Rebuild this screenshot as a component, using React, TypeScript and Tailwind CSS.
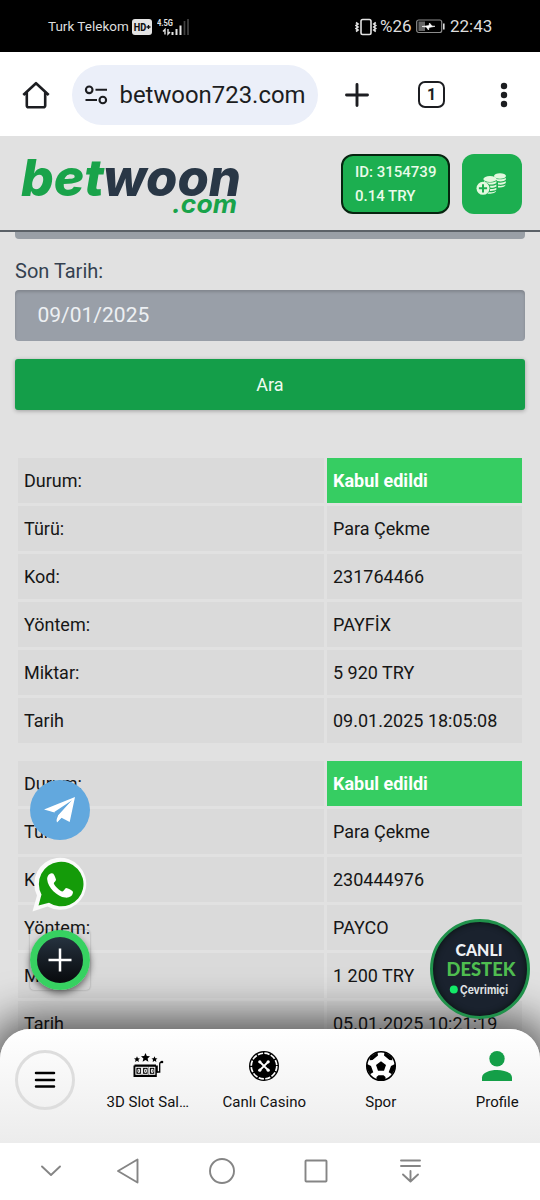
import React from "react";

const rowsA: [string, string][] = [
  ["Durum:", "Kabul edildi"],
  ["Türü:", "Para Çekme"],
  ["Kod:", "231764466"],
  ["Yöntem:", "PAYFİX"],
  ["Miktar:", "5 920 TRY"],
  ["Tarih", "09.01.2025 18:05:08"],
];
const rowsB: [string, string][] = [
  ["Durum:", "Kabul edildi"],
  ["Türü:", "Para Çekme"],
  ["Kod:", "230444976"],
  ["Yöntem:", "PAYCO"],
  ["Miktar:", "1 200 TRY"],
  ["Tarih", "05.01.2025 10:21:19"],
];

function StatusBar() {
  return (
    <div className="flex h-[52px] shrink-0 items-center bg-black pl-12 pr-12 pt-px text-[#dedede]">
      <span className="w-[84px] whitespace-nowrap text-[13.5px] leading-none">Turk Telekom</span>
      <svg width="20" height="16" viewBox="0 0 20 16">
        <rect width="20" height="16" rx="3" fill="#e4e4e4" />
        <text x="1.8" y="12" fontSize="10.5" fontWeight="800" fill="#111" textLength="12.5" lengthAdjust="spacingAndGlyphs">HD</text>
        <path d="M14.5 8h4M16.5 6v4" stroke="#111" strokeWidth="1.3" />
      </svg>
      <svg className="ml-[5px]" width="33" height="18" viewBox="0 0 33 18">
        <text x="0" y="7.8" fontSize="9" fontWeight="700" fill="#e4e4e4" textLength="16" lengthAdjust="spacingAndGlyphs">4.5G</text>
        <path d="M8 16.5v-5l-2 2M11 11v5l2-2" stroke="#e4e4e4" strokeWidth="1.4" fill="none" />
        <path d="M15.5 17v-3M19.5 17v-6M23.5 17V7.500" stroke="#e4e4e4" strokeWidth="2" />
        <path d="M27.500 17V3M31 17V1" stroke="#414141" strokeWidth="1.7" />
      </svg>
      <div className="ml-auto flex items-center">
        <svg width="22" height="18" viewBox="0 0 22 18" fill="none" stroke="#e2e2e2" strokeWidth="1.6">
          <rect x="6" y="1.500" width="10" height="15" rx="1.700" />
          <path d="M1 4.500l2 1.500-2 1.500 2 1.500-2 1.500 2 1.500-2 1.500M20.800 4.500l-2 1.500 2 1.500-2 1.500 2 1.500-2 1.500 2 1.500" />
        </svg>
        <span className="ml-[3px] w-[32px] whitespace-nowrap text-[17px] leading-none">%26</span>
        <svg className="ml-[4px]" width="29" height="15" viewBox="0 0 29 15">
          <rect x=".7" y="1" width="25" height="12.500" rx="2" fill="none" stroke="#8c8c8c" strokeWidth="1.2" />
          <rect x="2.500" y="2.500" width="6.500" height="9.500" fill="#666" />
          <path d="M6 7.500l7-1 .5-2.500 2.500 3 3 .3-6 1.200-.5 2.500-2.200-3z" fill="#fff" stroke="#fff" strokeWidth=".6" />
          <path d="M27.800 4.500v6" stroke="#ddd" strokeWidth="1.600" />
        </svg>
        <span className="ml-[5px] w-[42px] whitespace-nowrap text-[17px] leading-none">22:43</span>
      </div>
    </div>
  );
}

function BrowserBar() {
  return (
    <div className="flex h-[84px] shrink-0 items-center bg-white pl-[22px] pt-px text-[#1c1d21]">
      <svg width="28" height="30" viewBox="0 0 28 30" fill="none" stroke="currentColor" strokeWidth="2.600" strokeLinejoin="round">
        <path d="M1.300 15L14 3.200 26.700 15M4.800 12.500v13a1.800 1.800 0 0 0 1.800 1.800h14.800a1.800 1.800 0 0 0 1.800-1.800v-13" />
      </svg>
      <div className="ml-[22px] flex h-[60px] w-[246px] items-center rounded-full bg-[#ebeff9] pl-3">
        <svg width="24" height="20" viewBox="0 0 24 20" fill="none" stroke="currentColor" strokeWidth="2.100">
          <circle cx="5.200" cy="4.800" r="3.300" />
          <circle cx="18.800" cy="15" r="3.300" />
          <path d="M11.500 4.800H23M1.500 15H13" />
        </svg>
        <span className="ml-[11.500px] whitespace-nowrap pt-[2px] text-[23.900px]">betwoon723.com</span>
      </div>
      <svg className="ml-[27px]" width="24" height="24" viewBox="0 0 24 24" stroke="currentColor" strokeWidth="2.900" strokeLinecap="round">
        <path d="M12 1.500v21M1.500 12h21" />
      </svg>
      <div className="ml-[49px] flex h-[27px] w-[27px] items-center justify-center rounded-[7px] border-[2.500px] border-[#1c1d21] pt-px text-[16px] font-bold leading-none">1</div>
      <svg className="ml-[52px]" width="14" height="26" viewBox="0 0 14 26" fill="currentColor">
        <circle cx="7" cy="4" r="3.200" />
        <circle cx="7" cy="13" r="3.200" />
        <circle cx="7" cy="22" r="3.200" />
      </svg>
    </div>
  );
}

function Logo() {
  return (
    <svg width="224" height="84" viewBox="0 -9 224 84" aria-label="betwoon.com" fontFamily="Inter, sans-serif" fontWeight="800" fontStyle="italic">
      <text x="0" y="44.500" fontSize="51" fill="#19a34a" textLength="83" lengthAdjust="spacingAndGlyphs">bet</text>
      <text x="82" y="44.500" fontSize="51" fill="#293746" textLength="138" lengthAdjust="spacingAndGlyphs">woon</text>
      <text x="151" y="62" fontSize="25.500" fontWeight="700" fill="#19a34a" textLength="65" lengthAdjust="spacingAndGlyphs">.com</text>
    </svg>
  );
}

function Coins() {
  return (
    <svg width="32" height="24" viewBox="0 0 32 24" fill="#e4f8df">
      <ellipse cx="24" cy="4" rx="6" ry="2.800" />
      <path d="M18.200 5.800c2.200 2 9 2 11.600 0v2c-2 1.800-5 2-8.500 1.300zM22 10.500c3 .5 6 0 7.800-1.200v1.800c-2 1.500-4.500 1.800-7.800 1.400zM22 13.800c3 .4 6 0 7.600-1.300-.2 2.200-3 3.200-7.600 2.900z" />
      <ellipse cx="14" cy="7" rx="6.600" ry="3" />
      <path d="M8 8.900c3 2.300 9 2.200 12.400 0v2c-2 1.500-5 1.700-7.200 1.500-.8-1-2.700-2.200-5.200-2.200zM14 13.800c2.500.2 5-.2 6.400-1.300v2c-1.600 1-3.800 1.300-6 1.200zM14.200 17.100c2.500.1 5-.2 6.200-1.300v1.800c-1.700 1.200-4.200 1.500-6.500 1.400zM12.600 20.200c3 .2 6-.3 7.500-1.500-.2 2-3.800 3.300-8.600 3z" />
      <circle cx="7" cy="16.300" r="6.500" />
      <path d="M7 12.200v8.200M2.900 16.300h8.200" stroke="#1caf50" strokeWidth="2" />
    </svg>
  );
}

function SiteHeader() {
  return (
    <header className="flex h-24 shrink-0 items-center border-b-2 border-[#5b6167] bg-[#e1e1e1] pl-[21px] pr-[18px] pt-px">
      <Logo />
      <div className="ml-auto flex h-[60px] w-[109px] flex-col justify-center rounded-[12px] border-2 border-[#06240f] bg-[#1caf50] pl-3 text-[15px] font-medium leading-6 text-[#e9fbe8]">
        <span className="whitespace-nowrap">ID: 3154739</span>
        <span>0.14 TRY</span>
      </div>
      <div className="ml-3 flex h-[60px] w-[60px] items-center justify-center rounded-[12px] bg-[#1caf50]">
        <Coins />
      </div>
    </header>
  );
}

function Table({ rows }: { rows: [string, string][] }) {
  return (
    <div className="mx-[18px] flex flex-col gap-[3px] text-[18px] leading-[45px] text-[#161616]">
      {rows.map(([k, v], i) => (
        <div key={k} className="grid h-[45px] grid-cols-[306px_195px] gap-[3px]">
          <div className="bg-[#dadada] pl-[6px]">{k}</div>
          <div className={i === 0 ? "bg-[#36cd62] pl-[6px] font-bold text-white" : "bg-[#dadada] pl-[6px]"}>{v}</div>
        </div>
      ))}
    </div>
  );
}

function FloatingButtons() {
  return (
    <>
      <svg className="absolute left-[30px] top-[548px]" width="60" height="60" viewBox="0 0 60 60">
        <circle cx="30" cy="30" r="30" fill="#62a8de" />
        <path d="M14 29.500L45 17l-5.300 25-8.200-4.200-4.500 4.700-2.300-10z" fill="#fff" />
        <path d="M17.500 29.600L41.500 20.500 24.800 32.500z" fill="#fff" />
        <path d="M24.300 32L42 20.200 28.200 35.300 26 41z" fill="#62a8de" />
        <path d="M28.500 35.500L42.500 20 38.800 40.300 31.500 37.200 27 42z" fill="#fff" />
      </svg>
      <svg className="absolute left-[31px] top-[624px]" width="58" height="58" viewBox="0 0 58 58">
        <path d="M1.500 55.500L6 39.500A26 26 0 1 1 16.500 50.500z" fill="#fafafa" />
        <path d="M7.500 49.500l3-11A22.300 22.300 0 1 1 18 46.700z" fill="#149b09" />
        <path d="M20.500 17.200c-2.500.3-4.500 3-4.300 6.200.5 8 10 17 18 18.200 4 .4 7.600-1.600 7.800-5.600 0-1-5.200-3.900-6.700-3.900-1.500.2-2.200 3.200-3.800 3.300-2.500-.2-8-5.500-8.700-8 0-1.400 2.200-2 2.200-3.600-.2-1.600-2-5.800-3.100-6.300z" fill="#fff" />
      </svg>
      <div className="absolute left-[30px] top-[698px] flex h-[60px] w-[60px] items-center justify-center rounded-[4px] shadow-[0_0_2px_rgba(0,0,0,0.3)]">
        <div className="flex h-[60px] w-[60px] items-center justify-center rounded-full border-[7px] border-[#37d161] bg-linear-to-b from-[#263340] to-[#080a0d] shadow-[0_3px_7px_rgba(0,0,0,0.55)]">
          <svg width="24" height="24" viewBox="0 0 24 24" stroke="#fff" strokeWidth="2.500">
            <path d="M12 .5v23M.5 12h23" />
          </svg>
        </div>
      </div>
      <div className="absolute left-[430px] top-[687px] flex h-[100px] w-[100px] flex-col items-center rounded-full border-[3.500px] border-[#20924b] bg-[#1a222e] pt-[17px] shadow-[inset_0_0_6px_#08110d]">
        <svg width="80" height="64" viewBox="0 0 80 64" fontFamily="Lato, sans-serif">
          <text x="15.500" y="17" fontSize="16.500" fontWeight="900" fill="#eff1f5" textLength="47" lengthAdjust="spacingAndGlyphs">CANLI</text>
          <text x="6.500" y="36.500" fontSize="18.500" fontWeight="900" fill="#4fbd50" textLength="69" lengthAdjust="spacingAndGlyphs">DESTEK</text>
          <circle cx="13.800" cy="50.500" r="4" fill="#13e968" />
          <text x="20" y="54.500" fontSize="12" fontWeight="700" fontFamily="Inter, sans-serif" fill="#e0e2e5" textLength="48" lengthAdjust="spacingAndGlyphs">Çevrimiçi</text>
        </svg>
      </div>
    </>
  );
}

function SlotIcon() {
  return (
    <svg width="32" height="32" viewBox="0 0 32 32">
      <g fill="#000">
        <path d="M13.500 3l1.300 3 3.200.3-2.400 2.200.8 3.200-2.900-1.700-2.900 1.700.8-3.200L9 6.300l3.200-.3z" />
        <path d="M5 6.300l.9 1.900 2.100.2-1.600 1.400.5 2.100L5 10.800l-1.900 1.100.5-2.100L2 8.400l2.100-.2zM22.500 6.300l.9 1.900 2.100.2-1.600 1.400.5 2.100-1.900-1.100-1.900 1.100.5-2.100-1.600-1.400 2.100-.2z" />
        <path d="M2.500 14.500h21.500v1h1.800v7h-1v4.500H1.500V15.500h1z" />
      </g>
      <path d="M24.500 22h3.200v-7.800c0-1.800.6-2.300 2-2.300" fill="none" stroke="#000" strokeWidth="1.300" />
      <circle cx="30" cy="12" r="1.300" fill="#000" />
      <g fill="none" stroke="#fff" strokeWidth="1">
        <rect x="3.900" y="17.300" width="5.500" height="7" />
        <rect x="10.600" y="17.300" width="5.500" height="7" />
        <rect x="17.300" y="17.300" width="5.500" height="7" />
        <path d="M6 19.300h1.600v3H6zM12.700 19.300h1.600v3h-1.600zM19.400 19.300H21v3h-1.600z" />
      </g>
    </svg>
  );
}

function ChipIcon() {
  return (
    <svg width="32" height="32" viewBox="0 0 32 32">
      <circle cx="16" cy="16" r="15" fill="#000" />
      <circle cx="16" cy="16" r="12.800" fill="none" stroke="#fff" strokeWidth="1.700" strokeDasharray="5.300 1.402" />
      <path d="M12 12l8 8M20 12l-8 8" stroke="#fff" strokeWidth="1.800" />
      <g fill="#fff">
        <circle cx="11.800" cy="11.800" r="1.600" />
        <circle cx="20.200" cy="11.800" r="1.600" />
        <circle cx="11.800" cy="20.200" r="1.600" />
        <circle cx="20.200" cy="20.200" r="1.600" />
      </g>
    </svg>
  );
}

function BallIcon() {
  return (
    <svg width="32" height="32" viewBox="0 0 32 32">
      <circle cx="16" cy="16" r="14.300" fill="#fff" stroke="#000" strokeWidth="1.500" />
      <path d="M16 11.300l5 3.700-2 5.700h-6L11 15zM12.500 2l.5 3.500L7.500 10l-3 .2 1-3.700zM19.500 2l-.5 3.500 5.500 4.500 3 .2-1-3.700zM2 14l4 2 2.300 6.300-3.300 2L2 19zM30 14l-4 2-2.300 6.300 3.300 2L30 19zM11.500 27l2-1.800h5l2 1.800v2.500l-4.500 1-4.500-1z" fill="#000" />
    </svg>
  );
}

function ProfileIcon() {
  return (
    <svg width="32" height="32" viewBox="0 0 32 32" fill="#149f48">
      <circle cx="16" cy="8.700" r="7.700" />
      <path d="M1 31v-3.500C1 22.500 9 20 16 20s15 2.500 15 7.500V31z" />
    </svg>
  );
}

function Tab({ icon, label }: { icon: React.ReactNode; label: string }) {
  return (
    <div className="flex w-[116.500px] shrink-0 flex-col items-center pt-[21px]">
      {icon}
      <span className="mt-[9px] whitespace-nowrap text-[15px] leading-[22px] text-[#111]">{label}</span>
    </div>
  );
}

function BottomNav() {
  return (
    <nav className="absolute inset-x-0 bottom-0 flex h-[114px] overflow-hidden rounded-t-[30px] bg-linear-to-b from-white to-[#ececec]">
      <div className="ml-[15px] mt-[21px] flex h-[60px] w-[60px] shrink-0 items-center justify-center rounded-full border-[3px] border-[#dddddd]">
        <svg width="22" height="18" viewBox="0 0 22 18" stroke="#000" strokeWidth="2.500" strokeLinecap="round">
          <path d="M2 2h18M2 9h18M2 15.500h18" />
        </svg>
      </div>
      <div className="ml-[14.500px] flex">
        <Tab icon={<SlotIcon />} label="3D Slot Sal…" />
        <Tab icon={<ChipIcon />} label="Canlı Casino" />
        <Tab icon={<BallIcon />} label="Spor" />
        <Tab icon={<ProfileIcon />} label="Profile" />
      </div>
    </nav>
  );
}

function SystemNav() {
  return (
    <div className="h-[57px] shrink-0 bg-white">
      <svg width="540" height="57" viewBox="0 0 540 57" fill="none" stroke="#858585" strokeWidth="1.900" strokeLinejoin="round" strokeLinecap="round">
        <path d="M42 23.500l9 8.500 9-8.500" />
        <path d="M137.500 16.500v23L118 28z" />
        <circle cx="222" cy="28" r="12" />
        <rect x="305.500" y="17.500" width="21" height="21" rx=".8" />
        <path d="M401 17.500h19M401 23h19M410.500 28v10M403 31.500l7.500 7 7.500-7" />
      </svg>
    </div>
  );
}

export default function App() {
  return (
    <div className="flex h-[1200px] w-[540px] flex-col overflow-hidden bg-white font-[Roboto,sans-serif]">
      <StatusBar />
      <BrowserBar />
      <SiteHeader />
      <main className="relative min-h-0 flex-1 overflow-hidden bg-[#e1e1e1]">
        <div className="mx-[15px] h-[7px] rounded-b-[4px] bg-[#999fa6]" />
        <div className="mt-[17px] pl-[15px] text-[20px] leading-[30px] text-[#354150]">Son Tarih:</div>
        <div className="mx-[15px] mt-[4px] flex h-[51px] items-center rounded-[4px] bg-[#999fa8] pl-[22.500px] text-[21px] text-[#edf0f3] shadow-[inset_0_2px_3px_rgba(0,0,0,0.16)]">09/01/2025</div>
        <button className="mx-[15px] mt-[18px] block h-[51px] w-[510px] rounded-[3px] bg-[#149e49] text-[18px] text-[#effbf1] shadow-[0_1px_4px_rgba(0,0,0,0.3)]">Ara</button>
        <div className="mt-12">
          <Table rows={rowsA} />
        </div>
        <div className="mt-[18px]">
          <Table rows={rowsB} />
        </div>
        <div className="absolute inset-x-0 bottom-0 h-[114px] rounded-t-[30px] shadow-[0_0_42px_12px_rgba(0,0,0,0.6)]" />
        <FloatingButtons />
        <BottomNav />
      </main>
      <SystemNav />
    </div>
  );
}
